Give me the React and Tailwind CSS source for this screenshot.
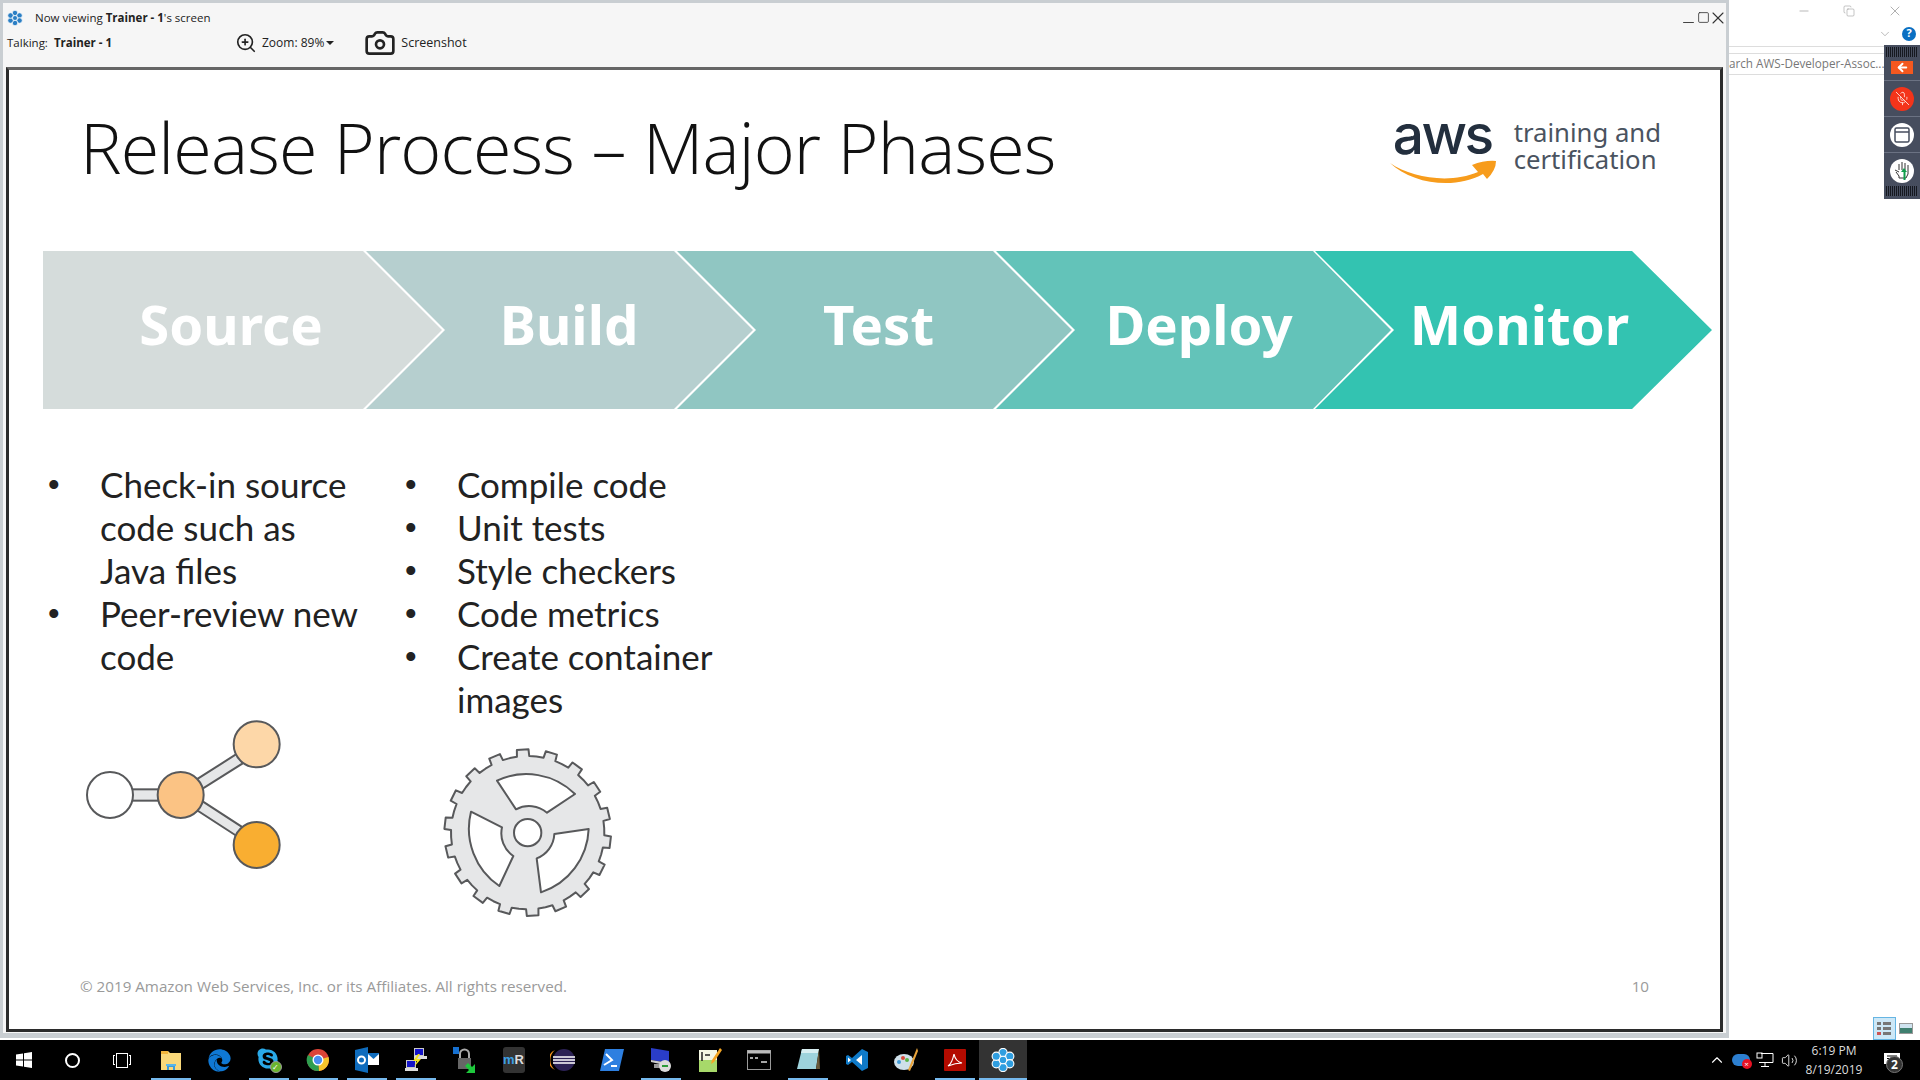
import React from 'react';
import { ArrowLeft, Camera, ChevronDown, ChevronUp, Copy, MicOff, Minus, Square, Volume2, X, ZoomIn } from 'lucide-react';
import { FaEdge, FaSkype } from 'react-icons/fa';

const phases = [
    { name: 'Source', cls: 'w-[400px] pr-[24px] bg-[#d5dcdb] [clip-path:polygon(0_0,320px_0,399px_50%,320px_100%,0_100%)]' },
    { name: 'Build', cls: 'w-[387px] -ml-[77px] pl-[19px] bg-[#b6cfcf] [clip-path:polygon(0_0,308px_0,387px_50%,308px_100%,0_100%,79px_50%)]' },
    { name: 'Test', cls: 'w-[395px] -ml-[76px] pl-[8px] bg-[#90c6c2] [clip-path:polygon(0_0,316px_0,395px_50%,316px_100%,0_100%,79px_50%)]' },
    { name: 'Deploy', cls: 'w-[395px] -ml-[76px] pl-[11px] bg-[#63c3b9] [clip-path:polygon(0_0,317px_0,395px_50%,317px_100%,0_100%,79px_50%)]' },
    { name: 'Monitor', cls: 'w-[397px] -ml-[76px] pl-[12px] bg-[#33c3b1] [clip-path:polygon(0_0,317px_0,397px_50%,317px_100%,0_100%,79px_50%)]' },
];

// gear outline, teeth worked out once
const gearPath = (() => {
    const teeth = 18, cx = 320, cy = 308, rOut = 250, rIn = 230;
    const pts = [];
    for (let i = 0; i < teeth; i++) {
        const a = (i / teeth) * Math.PI * 2 - Math.PI / 2 - 0.06;
        const w = (Math.PI * 2) / teeth;
        [[rIn, -0.5], [rIn, -0.23], [rOut, -0.2], [rOut, 0.2], [rIn, 0.23]].forEach(([r, o]) => {
            pts.push(`${(cx + r * Math.cos(a + o * w)).toFixed(1)},${(cy + r * Math.sin(a + o * w)).toFixed(1)}`);
        });
    }
    return 'M' + pts.join('L') + 'Z';
})();

const SourceIcon = () => (
    <svg width="280" height="190" viewBox="0 0 840 570" className="block">
        <g stroke="#58595b" strokeWidth="6" fill="#e6e7e8">
            <rect x="210" y="268" width="100" height="34" />
            <path d="M410 238 L530 162 L548 190 L428 266Z" />
            <path d="M428 304 L548 382 L530 408 L410 330Z" />
            <circle cx="150" cy="285" r="69" fill="#fff" />
            <circle cx="362" cy="285" r="69" fill="#fbc384" />
            <circle cx="590" cy="133" r="69" fill="#fdd7a8" />
            <circle cx="590" cy="435" r="69" fill="#f9ae31" />
        </g>
    </svg>
);

const GearIcon = () => (
    <svg width="210" height="200" viewBox="0 0 630 600" className="block">
        <g stroke="#58595b" strokeWidth="6" strokeLinejoin="round">
            <path d={gearPath} fill="#e6e7e8" />
            <path d="M228 152 A208 208 0 0 1 462 192 L378 248 A82 82 0 0 0 285 238Z" fill="#fff" />
            <path d="M150 245 L243 292 A82 82 0 0 0 277 378 L235 468 A208 208 0 0 1 150 245Z" fill="#fff" />
            <path d="M503 297 L400 312 A82 82 0 0 1 347 385 L360 487 A208 208 0 0 0 503 297Z" fill="#fff" />
            <circle cx="320" cy="308" r="41" fill="#fff" />
        </g>
    </svg>
);

const Flower = ({ size = 16, color = '#2b7fc4' }) => (
    <svg width={size} height={size} viewBox="0 0 32 32">
        <g fill={color} stroke="#fff" strokeWidth="1.5">
            <circle cx="16" cy="6" r="5.5" />
            <circle cx="25" cy="11" r="5.5" />
            <circle cx="25" cy="21" r="5.5" />
            <circle cx="16" cy="26" r="5.5" />
            <circle cx="7" cy="21" r="5.5" />
            <circle cx="7" cy="11" r="5.5" />
            <circle cx="16" cy="16" r="5" />
        </g>
    </svg>
);

const BulletList = ({ items, className }) => (
    <ul className={className}>
        {items.map((item) => (
            <li key={item} className="flex">
                <span className="w-[52px] shrink-0 text-[33px] font-['Liberation_Sans',sans-serif]">•</span>
                <span>{item}</span>
            </li>
        ))}
    </ul>
);

const Slide = () => (
    <div className="flex-1 flex flex-col bg-white border-[3px] border-[#2b2b2b] border-t-[#666] font-['Open_Sans',sans-serif]">
        <div className="h-[181px] flex justify-between pl-[71px] pr-[59px] shrink-0">
            <h1 className="mt-[31px] text-[70px] leading-[92px] font-light tracking-[-0.85px] text-[#111]">Release Process – Major Phases</h1>
            <div className="flex items-start mt-[38px]">
                <div className="relative w-[122px] h-[70px]">
                    <span className="block text-[55px] leading-[52px] font-medium tracking-[-2.5px] text-[#232f3e] font-['Inter',sans-serif] pl-[1px]">aws</span>
                    <svg width="107" height="26" viewBox="0 0 107 26" className="absolute left-[-2px] top-[52px]">
                        <path d="M0 3 C22 18 60 24 88 12 L82 5 Q95 0 106 1 Q106 10 97 19 L93 14 C65 30 22 24 0 3Z" fill="#f79c1c" />
                    </svg>
                </div>
                <div className="text-[25.7px] leading-[27px] text-[#4a5360] font-['Noto_Sans',sans-serif] mt-[11px]">
                    <div>training and</div>
                    <div>certification</div>
                </div>
            </div>
        </div>
        <div className="flex pl-[34px] h-[158px] shrink-0">
            {phases.map((p) => (
                <div key={p.name} className={`h-full flex items-center justify-center text-white text-[54.5px] font-bold font-['Noto_Sans',sans-serif] ${p.cls}`}>
                    <span className="-mt-[10px]">{p.name}</span>
                </div>
            ))}
        </div>
        <div className="flex pl-[39px] mt-[54px] text-[35px] leading-[43px] text-[#222] font-['Lato',sans-serif]">
            <div className="w-[357px]">
                <BulletList className="w-[314px]" items={['Check-in source code such as Java files', 'Peer-review new code']} />
                <div className="ml-[12px] mt-[22px]"><SourceIcon /></div>
            </div>
            <div className="w-[350px]">
                <BulletList items={['Compile code', 'Unit tests', 'Style checkers', 'Code metrics', 'Create container images']} />
                <div className="ml-[16px] mt-[9px]"><GearIcon /></div>
            </div>
        </div>
        <div className="mt-auto mb-[31px] flex justify-between pl-[71px] pr-[71px] text-[15.2px] text-[#9a9a9a]">
            <span>© 2019 Amazon Web Services, Inc. or its Affiliates. All rights reserved.</span>
            <span>10</span>
        </div>
    </div>
);

const Viewer = () => (
    <div className="w-[1729px] h-[1038px] shrink-0 flex flex-col bg-[#f6f6f6] border-[3px] border-b-[5px] border-[#c9ced2] font-['Open_Sans',sans-serif] text-[11.5px] text-[#222]">
        <div className="h-[64px] shrink-0 flex flex-col">
            <div className="h-[29px] flex items-center pl-[4px]">
                <Flower size={16} />
                <span className="ml-[12px]">Now viewing <b>Trainer - 1</b>'s screen</span>
                <div className="ml-auto flex items-center text-[#333]">
                    <Minus size={17} strokeWidth={1.3} className="translate-y-[5px]" />
                    <Square size={13} strokeWidth={1.5} />
                    <X size={20} strokeWidth={1.3} className="-ml-[2px] -mr-[2px]" />
                </div>
            </div>
            <div className="h-[22px] flex items-center pl-[4px]">
                <span className="w-[228px]">Talking:&nbsp; <b>Trainer - 1</b></span>
                <ZoomIn size={22} strokeWidth={1.8} />
                <span className="ml-[5px] text-[12px]">Zoom: 89%</span>
                <span className="ml-[2px] w-0 h-0 border-x-[4px] border-x-transparent border-t-[4px] border-t-[#222]"></span>
                <Camera size={32} strokeWidth={2} className="ml-[30px]" />
                <span className="ml-[5px] text-[12.5px]">Screenshot</span>
            </div>
        </div>
        <div className="flex-1 flex flex-col mx-[3px] mb-[1px] min-h-0">
            <Slide />
        </div>
    </div>
);

const ToolCircle = ({ children, className }) => (
    <div className="h-[36px] w-full flex items-center justify-center border-t border-[#6b7283]">
        <div className={`w-[24px] h-[24px] rounded-full flex items-center justify-center ${className}`}>{children}</div>
    </div>
);

const Grip = () => <div className="mx-[2px] h-[10px] bg-[repeating-linear-gradient(90deg,#15181f_0,#15181f_1px,#464d5e_1px,#464d5e_2px)]"></div>;

const RightPanel = () => (
    <div className="relative w-[191px] shrink-0 min-w-0 flex flex-col bg-white font-['Open_Sans',sans-serif]">
        <div className="h-[21px] flex items-center justify-end text-[#888] pr-[17px] gap-[32px]">
            <Minus size={14} strokeWidth={1} />
            <Copy size={12} strokeWidth={1} />
            <X size={16} strokeWidth={1} />
        </div>
        <div className="h-[25px] flex justify-end items-center pr-[4px] gap-[10px]">
            <ChevronDown size={14} strokeWidth={1} className="text-[#888]" />
            <div className="w-[14px] h-[14px] rounded-full bg-[#0a6fc2] text-white text-[11px] font-bold flex items-center justify-center">?</div>
        </div>
        <div className="mr-[36px] h-[7px] border-t border-[#ddd]"></div>
        <div className="mr-[36px] h-[22px] border-y border-[#ddd] overflow-hidden text-[11.7px] leading-[19px] text-[#777] whitespace-nowrap">arch AWS-Developer-Assoc...</div>
        <div className="mt-auto self-end flex items-end gap-[3px] pr-[7px]">
            <div className="w-[23px] h-[23px] bg-[#cde8f7] border border-[#66b5e3] flex flex-col justify-center gap-[2px] pl-[3px]">
                <div className="w-[14px] h-[3px] bg-[linear-gradient(90deg,#777_0_4px,transparent_4px_6px,#777_6px)]"></div>
                <div className="w-[14px] h-[3px] bg-[linear-gradient(90deg,#777_0_4px,transparent_4px_6px,#777_6px)]"></div>
                <div className="w-[14px] h-[3px] bg-[linear-gradient(90deg,#c55_0_4px,transparent_4px_6px,#777_6px)]"></div>
            </div>
            <div className="w-[14px] h-[11px] mb-[6px] border border-[#999] bg-[linear-gradient(180deg,#cfe3ef_45%,#3f7f6f_45%)]"></div>
        </div>
        {/* floating toolbar over the page */}
        <div className="absolute right-0 top-[45px] w-[36px] h-[154px] bg-[#464d5e] flex flex-col items-center pt-[2px]">
            <div className="w-full"><Grip /></div>
            <div className="h-[23px] w-full flex items-center justify-center">
                <div className="w-[22px] h-[13px] bg-[#f4581f] flex items-center justify-center text-white -translate-y-[1px]"><ArrowLeft size={13} strokeWidth={3.5} /></div>
            </div>
            <ToolCircle className="bg-[#f4341a] text-[#ffd9d0]"><MicOff size={15} strokeWidth={1.5} /></ToolCircle>
            <ToolCircle className="bg-white text-[#464d5e]">
                <svg width="16" height="16" viewBox="0 0 16 16" fill="none" stroke="currentColor" strokeWidth="1.5"><rect x="1" y="1" width="14" height="14" rx="1.5" /><path d="M1 5h14" /></svg>
            </ToolCircle>
            <ToolCircle className="bg-white">
                <svg width="18" height="20" viewBox="0 0 18 20" fill="none" stroke="#333" strokeWidth="1"><path d="M3 11 L6 15 V17 H13 L15 13 V4 M12 9V2 M9 9V1 M6 9V3 M6 11 L2 9" /><path d="M10.5 19 V11 H8 L11 7 L14 11 H12.5 V19Z" fill="#0f9d4a" stroke="none" /></svg>
            </ToolCircle>
            <div className="w-full mt-[-2px]"><Grip /></div>
        </div>
    </div>
);

const glyph = {
    explorer: (
        <svg width="24" height="24" viewBox="0 0 24 24"><path d="M2 3h7l2 2h11v17H2Z" fill="#f9d87a" /><path d="M2 3h7v3H2Z" fill="#f2b63c" /><path d="M8 22v-6h8v6h-2v-3h-4v3Z" fill="#3f9bd8" /><path d="M7 16h10v2H7Z" fill="#58b6ea" /></svg>
    ),
    edge: <FaEdge size={23} color="#0f78d4" />,
    skype: (
        <span className="relative block w-[26px] h-[26px]">
            <FaSkype size={24} color="#29a9e8" />
            <span className="absolute right-0 bottom-0 w-[12px] h-[12px] rounded-full bg-[#6bb52c] border border-[#999] text-white text-[8px] leading-[10px] text-center">✓</span>
        </span>
    ),
    chrome: (
        <svg width="24" height="24" viewBox="0 0 24 24"><circle cx="12" cy="12" r="11" fill="#dc4437" /><path d="M12 12 L22.5 9 A11 11 0 0 1 13 23Z" fill="#f6c42b" /><path d="M12 12 L13 23 A11 11 0 0 1 2 7Z" fill="#2f9e4f" /><circle cx="12" cy="12" r="5.5" fill="#fff" /><circle cx="12" cy="12" r="4.2" fill="#4a8ef0" /></svg>
    ),
    outlook: (
        <svg width="24" height="26" viewBox="0 0 24 26"><path d="M13 6h11v12H13Z" fill="#fff" /><path d="M13 7l5.500 5L24 7v-1H13Z" fill="#0f6cbd" /><path d="M0 3 13 0v26L0 23Z" fill="#0f6cbd" /><circle cx="6.500" cy="13" r="3.500" fill="none" stroke="#fff" strokeWidth="2" /></svg>
    ),
    putty: (
        <svg width="24" height="26" viewBox="0 0 24 26"><rect x="10" y="1" width="10" height="8" fill="#c9c9c9" /><rect x="11" y="2" width="8" height="6" fill="#1414c8" /><rect x="10" y="9" width="13" height="3" fill="#ddd" /><rect x="2" y="13" width="10" height="8" fill="#c9c9c9" /><rect x="3" y="14" width="8" height="6" fill="#1414c8" /><rect x="1" y="21" width="13" height="3" fill="#ddd" /><path d="M14 7 9 14h4l-3 6 7-8h-4l3-5Z" fill="#f5e61e" /></svg>
    ),
    lock: (
        <svg width="26" height="26" viewBox="0 0 26 26"><path d="M1 0h6v7H1Z" fill="#1670d0" /><path d="M8 11V7a4.500 4.500 0 0 1 9 0v4" fill="none" stroke="#aaa" strokeWidth="2" /><rect x="6" y="11" width="13" height="11" fill="#666" /><path d="M16 16l4 4 3-3v9h-9l3-3-4-4Z" fill="#1ec83c" /></svg>
    ),
    mr: (
        <div className="w-[22px] h-[26px] rounded-[3px] bg-[#333] text-[13px] leading-[26px] font-bold font-['Liberation_Sans',sans-serif] text-center"><span className="text-[#3ca0e6]">m</span><span className="text-[#ddd]">R</span></div>
    ),
    eclipse: (
        <svg width="26" height="26" viewBox="0 0 26 26"><circle cx="14" cy="13" r="11" fill="#2c2255" /><path d="M5 3 A13 13 0 0 0 5 23 A11 11 0 0 1 5 3Z" fill="#f7941e" /><path d="M3 10h22M3 13h22M3 16h22" stroke="#fff" strokeWidth="1.600" /></svg>
    ),
    powershell: (
        <svg width="24" height="22" viewBox="0 0 24 22"><path d="M5 0h19l-5 22H0Z" fill="#2d7fe0" /><path d="M6 5l6 6-8 5M11 17h6" fill="none" stroke="#fff" strokeWidth="2" /></svg>
    ),
    remote: (
        <svg width="26" height="26" viewBox="0 0 26 26"><path d="M3 1l18 3v12L3 13Z" fill="#2a3dc8" /><path d="M3 13l18 3v3L3 15Z" fill="#ccc" /><path d="M6 17h10v4H6Z" fill="#999" /><circle cx="17" cy="19" r="6" fill="#dcdcdc" /><path d="M14 19h6" stroke="#2a9a3a" strokeWidth="2" /></svg>
    ),
    notepadpp: (
        <svg width="24" height="26" viewBox="0 0 24 26"><path d="M1 3h18v22H1Z" fill="#a7d96a" /><path d="M1 3h18v10H1Z" fill="#f4f7e4" /><path d="M4 5v9M7 8h5" stroke="#222" strokeWidth="1.500" /><path d="M22 1l2 2-8 12-3 2 1-4Z" fill="#f5a623" /></svg>
    ),
    cmd: (
        <svg width="24" height="20" viewBox="0 0 24 20"><rect x="0.500" y="0.500" width="23" height="19" fill="#000" stroke="#999" /><rect x="0.500" y="0.500" width="23" height="3" fill="#bbb" /><path d="M3 8h3M8 8h3M14 12h6" stroke="#ddd" strokeWidth="1.500" /></svg>
    ),
    notepad: (
        <svg width="24" height="24" viewBox="0 0 24 24"><path d="M6 1h17l-3 20H1Z" fill="#9ed3dc" /><path d="M6 1h17l-1 4H5Z" fill="#d8eef1" /><path d="M20 21l3-20 1 20Z" fill="#6a5a3a" /></svg>
    ),
    vscode: (
        <svg width="24" height="24" viewBox="0 0 24 24"><path d="M17 1 23 4v16l-6 3L7 14l-4 3-2-1V8l2-1 4 3Z" fill="#0f7ac8" /><path d="M17 7v10l-6-5ZM3 9.500v5L6 12Z" fill="#fff" /></svg>
    ),
    paint: (
        <svg width="26" height="26" viewBox="0 0 26 26"><ellipse cx="11" cy="15" rx="10" ry="8" fill="#cfe0ea" /><circle cx="6" cy="15" r="2" fill="#3f9bd8" /><circle cx="10" cy="11" r="2" fill="#d84a3a" /><circle cx="14" cy="13" r="2" fill="#5ab54a" /><path d="M24 1l1 3-8 20-2-1Z" fill="#e8a33a" /></svg>
    ),
    acrobat: (
        <svg width="22" height="22" viewBox="0 0 22 22"><rect width="22" height="22" rx="1" fill="#b30b00" /><path d="M4 17c3-2 5-7 6-12 1 5 3 8 8 9-5 0-9 1-14 3Z" fill="none" stroke="#fff" strokeWidth="1.200" /></svg>
    ),
};

const apps = [
    { key: 'explorer', open: true },
    { key: 'edge' },
    { key: 'skype', open: true },
    { key: 'chrome', open: true },
    { key: 'outlook', open: true },
    { key: 'putty', open: true },
    { key: 'lock' },
    { key: 'mr' },
    { key: 'eclipse' },
    { key: 'powershell' },
    { key: 'remote', open: true },
    { key: 'notepadpp' },
    { key: 'cmd' },
    { key: 'notepad', open: true },
    { key: 'vscode' },
    { key: 'paint' },
    { key: 'acrobat', open: true },
];

const Taskbar = () => (
    <div className="h-[40px] shrink-0 bg-black flex items-stretch text-white font-['Open_Sans',sans-serif] text-[12px]">
        <div className="w-[48px] flex items-center justify-center">
            <svg width="16" height="16" viewBox="0 0 16 16" fill="#fff"><path d="M0 2.500 7 1.500v6H0ZM8 1.300 16 0v7.500H8ZM0 8.500h7v6l-7-1ZM8 8.500h8V16l-8-1.300Z" /></svg>
        </div>
        <div className="w-[49px] flex items-center justify-center">
            <div className="w-[15px] h-[15px] rounded-full border-2 border-white"></div>
        </div>
        <div className="w-[49px] flex items-center justify-center gap-[1px]">
            <div className="w-[2px] h-[10px] border-l border-y border-white"></div>
            <div className="w-[12px] h-[15px] border border-white"></div>
            <div className="w-[2px] h-[10px] border-r border-y border-white"></div>
        </div>
        {apps.map((a) => (
            <div key={a.key} className="relative w-[49px] flex items-center justify-center">
                {glyph[a.key]}
                {a.open && <div className="absolute bottom-0 left-[5px] right-[4px] h-[2px] bg-[#76b9ed]"></div>}
            </div>
        ))}
        <div className="relative w-[48px] bg-[#333] flex items-center justify-center">
            <Flower size={24} color="#2f9ee0" />
            <div className="absolute bottom-0 inset-x-0 h-[2px] bg-[#76b9ed]"></div>
        </div>
        <div className="ml-auto flex items-center">
            <div className="w-[22px] flex justify-center"><ChevronUp size={18} strokeWidth={1.5} /></div>
            <div className="w-[25px] flex justify-center">
                <div className="relative w-[18px] h-[12px] rounded-full bg-[#2d7fd0]">
                    <div className="absolute -right-[2px] -bottom-[3px] w-[10px] h-[10px] rounded-full bg-[#e81123] text-[8px] leading-[10px] text-center">×</div>
                </div>
            </div>
            <div className="w-[24px] flex justify-center">
                <svg width="18" height="16" viewBox="0 0 18 16" fill="none" stroke="#fff"><path d="M5 1.500h12v9H3M9 11v3M5 14.500h8" /><rect x="1" y="1" width="5" height="5" /></svg>
            </div>
            <div className="w-[24px] flex justify-center"><Volume2 size={17} strokeWidth={1.2} /></div>
            <div className="w-[60px] ml-[3px] text-center text-[#ddd] leading-[19px] whitespace-nowrap">
                <div>6:19 PM</div>
                <div>8/19/2019</div>
            </div>
            <div className="relative w-[56px] h-full flex items-center justify-center">
                <svg width="16" height="14" viewBox="0 0 16 14" fill="#fff"><path d="M0 0h16v11H9l-3 3v-3H0Z" /><path d="M3 3h10M3 5.500h10M3 8h7" stroke="#000" /></svg>
                <div className="absolute right-[17px] top-[16px] w-[17px] h-[17px] rounded-full bg-[#333] border border-[#777] text-[12px] font-bold leading-[15px] text-center">2</div>
            </div>
        </div>
    </div>
);

export default function App() {
    return (
        <div className="w-[1920px] h-[1080px] flex flex-col overflow-hidden bg-white">
            <div className="flex flex-1 min-h-0 items-stretch">
                <div className="shrink-0 flex flex-col"><Viewer /></div>
                <RightPanel />
            </div>
            <Taskbar />
        </div>
    );
}
